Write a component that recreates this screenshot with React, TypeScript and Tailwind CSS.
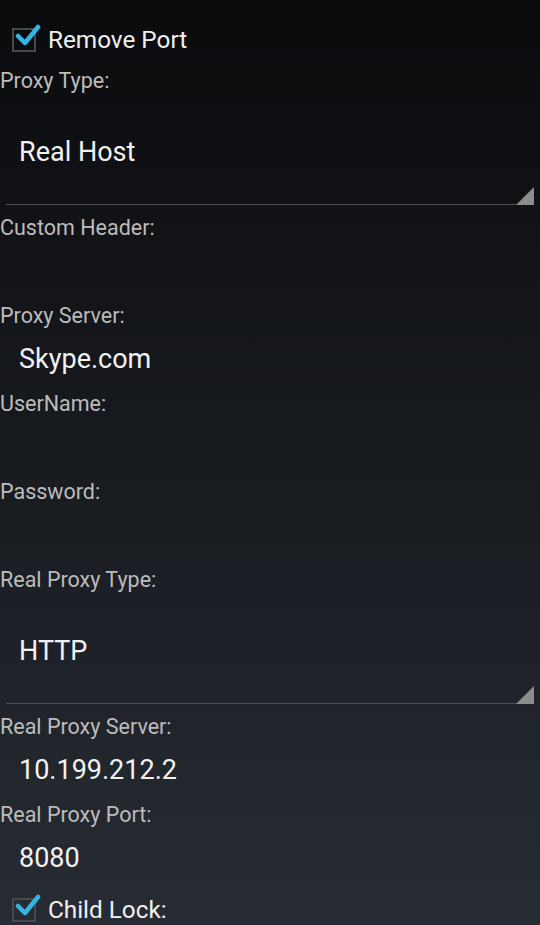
import React from "react";

type TFieldProps = {
  label: string;
  value?: string;
};

const Label = ({ text }: { text: string }) => (
  <div className="h-[25px] flex items-center text-[21.5px] leading-[25px] text-[#bcbcbc]">
    {text}
  </div>
);

const EditField = ({ label, value }: TFieldProps) => (
  <div>
    <Label text={label} />
    <div className="h-[63px] flex items-center pl-[19px] text-[27px] text-[#f2f2f2]">
      {value}
    </div>
  </div>
);

const SpinnerField = ({ label, value }: TFieldProps) => (
  <div>
    <Label text={label} />
    <div className="h-[122px] px-[6px] flex flex-col">
      <div className="h-[111px] flex items-center pl-[13px] pt-[8px] text-[27px] text-[#f2f2f2]">
        {value}
      </div>
      <div className="relative h-px bg-[#4c4e52]">
        <svg
          className="absolute right-0 bottom-0"
          width="18"
          height="18"
          viewBox="0 0 18 18"
        >
          <polygon points="0,18 18,18 18,0" fill="#8c8c8c" />
        </svg>
      </div>
    </div>
  </div>
);

const CheckRow = ({ text, className }: { text: string; className: string }) => (
  <div className={`flex items-center ${className}`}>
    <div className="relative ml-[12px] w-[24px] h-[24px] border-2 border-[#47494c]">
      <svg
        className="absolute -top-[7px] left-[1px]"
        width="26"
        height="26"
        viewBox="0 0 26 26"
      >
        <path
          d="M3 13 L10 20 L23 4"
          fill="none"
          stroke="#33b5e5"
          strokeWidth="4.5"
          strokeLinecap="round"
          strokeLinejoin="round"
        />
      </svg>
    </div>
    <span className="ml-[12px] text-[24.3px] text-[#f0f0f0]">{text}</span>
  </div>
);

export default function App() {
  return (
    <div
      className="w-[540px] h-[925px] overflow-hidden bg-gradient-to-b from-[#0a0b0d] to-[#272c34] pt-[16px]"
      style={{ fontFamily: "Roboto, 'Liberation Sans', sans-serif" }}
    >
      <CheckRow text="Remove Port" className="h-[48px] mb-[3.5px]" />
      <SpinnerField label="Proxy Type:" value="Real Host" />
      <EditField label="Custom Header:" />
      <EditField label="Proxy Server:" value="Skype.com" />
      <EditField label="UserName:" />
      <EditField label="Password:" />
      <SpinnerField label="Real Proxy Type:" value="HTTP" />
      <EditField label="Real Proxy Server:" value="10.199.212.2" />
      <EditField label="Real Proxy Port:" value="8080" />
      <CheckRow text="Child Lock:" className="h-[41px]" />
    </div>
  );
}
